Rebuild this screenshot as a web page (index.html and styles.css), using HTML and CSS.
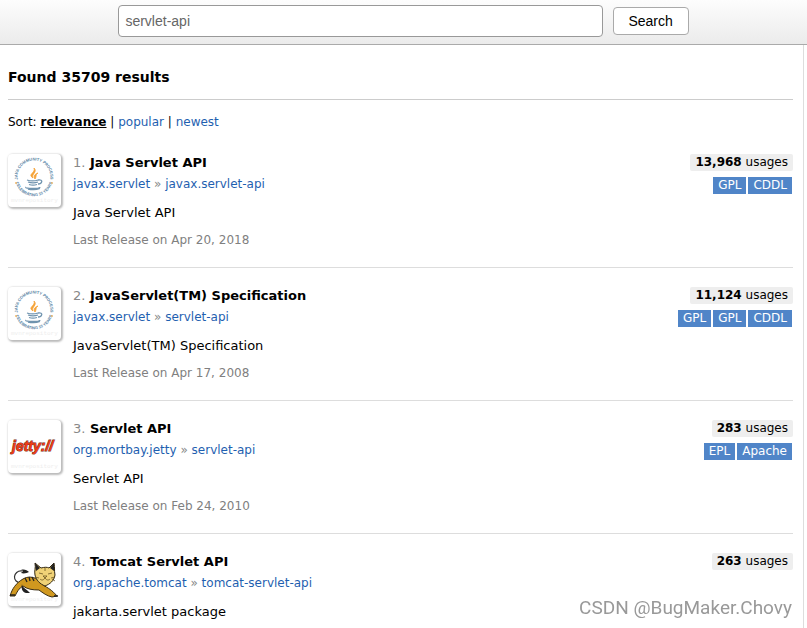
FILE: index.html
```html
<!DOCTYPE html>
<html lang="en">
<head>
  <meta charset="UTF-8" />
  <title>servlet-api - Search</title>
  <meta name="viewport" content="width=device-width, initial-scale=1.0" />
  <link rel="stylesheet" href="styles.css">
</head>
<body>

  <!-- Shared shapes of the Java logo -->
  <svg class="defs" aria-hidden="true">
    <defs>
      <path id="arc-top" d="M12.500 32.500A16.500 16.500 0 1 1 39.500 32.500" />
      <path id="arc-bottom" d="M7.600 28A19 19 0 0 0 44.400 28" />
      <g id="cup">
        <circle cx="8" cy="29" r=".9" fill="#f3b763" />
        <circle cx="44" cy="29" r=".9" fill="#f3b763" />
        <path d="M25 24c-6-4 3-5 1-10 4 4-3 6-1 10zM27 25c-2-3 0-5 3-6-3 2-1 3-3 6z" fill="#f5a236" stroke="#f5a236" stroke-width=".8" />
        <path d="M19 26c3 1 8 1 11 0M20 28c3 1 7 1 10 0M21 30.500c3 1 5 1 8 0M30 26c6-1 4 4 0 4M18 33c-2 2 14 2 14 0M20 35c4 1 8 1 12-.5" fill="none" stroke="#6f93ae" stroke-width="1.300" />
      </g>
    </defs>
  </svg>

  <header>
    <form class="search">
      <input type="text" name="q" value="servlet-api" aria-label="Search" />
      <button type="submit">Search</button>
    </form>
  </header>

  <main>
    <h2>Found 35709 results</h2>
    <div class="sort">
      Sort: <a class="active" href="#">relevance</a> | <a href="#">popular</a> | <a href="#">newest</a>
    </div>

    <div class="item">
      <div class="logo">
        <svg viewBox="0 0 53 53">
          <text class="ring"><textPath href="#arc-top" startOffset="50%">JAVA COMMUNITY PROCESS</textPath></text>
          <text class="ring"><textPath href="#arc-bottom" startOffset="50%">CELEBRATING 15 YEARS</textPath></text>
          <use href="#cup" />
        </svg>
        <span>mvnrepository</span>
      </div>
      <div class="info">
        <h3><span>1.</span> <a href="#">Java Servlet API</a></h3>
        <p class="path"><a href="#">javax.servlet</a> » <a href="#">javax.servlet-api</a></p>
        <p class="description">Java Servlet API</p>
        <p class="date">Last Release on Apr 20, 2018</p>
      </div>
      <div class="meta">
        <a class="usages" href="#"><b>13,968</b> usages</a>
        <div class="licenses"><span>GPL</span><span>CDDL</span></div>
      </div>
    </div>

    <div class="item">
      <div class="logo">
        <svg viewBox="0 0 53 53">
          <text class="ring"><textPath href="#arc-top" startOffset="50%">JAVA COMMUNITY PROCESS</textPath></text>
          <text class="ring"><textPath href="#arc-bottom" startOffset="50%">CELEBRATING 15 YEARS</textPath></text>
          <use href="#cup" />
        </svg>
        <span>mvnrepository</span>
      </div>
      <div class="info">
        <h3><span>2.</span> <a href="#">JavaServlet(TM) Specification</a></h3>
        <p class="path"><a href="#">javax.servlet</a> » <a href="#">servlet-api</a></p>
        <p class="description">JavaServlet(TM) Specification</p>
        <p class="date">Last Release on Apr 17, 2008</p>
      </div>
      <div class="meta">
        <a class="usages" href="#"><b>11,124</b> usages</a>
        <div class="licenses"><span>GPL</span><span>GPL</span><span>CDDL</span></div>
      </div>
    </div>

    <div class="item">
      <div class="logo">
        <svg viewBox="0 0 53 53">
          <text class="jetty" x="4" y="31">jetty://</text>
        </svg>
        <span>mvnrepository</span>
      </div>
      <div class="info">
        <h3><span>3.</span> <a href="#">Servlet API</a></h3>
        <p class="path"><a href="#">org.mortbay.jetty</a> » <a href="#">servlet-api</a></p>
        <p class="description">Servlet API</p>
        <p class="date">Last Release on Feb 24, 2010</p>
      </div>
      <div class="meta">
        <a class="usages" href="#"><b>283</b> usages</a>
        <div class="licenses"><span>EPL</span><span>Apache</span></div>
      </div>
    </div>

    <div class="item">
      <div class="logo">
        <svg viewBox="0 0 53 53">
          <path d="M14 30C3 30 5 17 14 18" fill="none" stroke="#333" stroke-width="1.200" />
          <path d="M13 17c3-1 6 0 8 2-2 1-5 2-8 1l2-2z" fill="#222" />
          <path d="M2 43c2-7 6-13 13-17 5-3 10-2 14 0l6 6c5 3 9 5 14 11l-5 1c-5-1-9-4-13-7-7 0-12-1-16-4-4 2-6 6-8 10z" fill="#d0981f" stroke="#3b2d12" />
          <path d="M14 31c0 4 5 5 8 9h-4c-4-1-5-5-4-9z" fill="#222" />
          <path d="M17 25l2 4M21 24l1 4M24 24l2 4M2 42h5M46 43h4" stroke="#222" stroke-width="1.300" />
          <path d="M27 10l6 5c4-1 6-1 8 0l5-5c1 5 0 7 1 12-1 6-5 9-10 11-5-2-9-6-10-11-1-4 1-7 0-12z" fill="#f0d277" stroke="#302611" />
          <path d="M27 10l5 5-4 3zM46 10l-4 5 4 3z" fill="#222" />
          <path d="M31 20l4 1M44 20l-4 1M37 15v3M35 23h4l-2 2zM37 25c-2 3-4 2-5 1M37 25c2 3 4 2 5 1M27 24l4 1M47 24l-4 1M47 28l-3-2" fill="none" stroke="#6b5622" stroke-width=".8" />
        </svg>
        <span>mvnrepository</span>
      </div>
      <div class="info">
        <h3><span>4.</span> <a href="#">Tomcat Servlet API</a></h3>
        <p class="path"><a href="#">org.apache.tomcat</a> » <a href="#">tomcat-servlet-api</a></p>
        <p class="description">jakarta.servlet package</p>
      </div>
      <div class="meta">
        <a class="usages" href="#"><b>263</b> usages</a>
      </div>
    </div>
  </main>

  <div class="watermark">CSDN @BugMaker.Chovy</div>

</body>
</html>
```
FILE: styles.css
```css
* {
  box-sizing: border-box;
}

body {
  margin: 0;
  min-height: 100vh;
  display: flex;
  flex-direction: column;
  font-family: Verdana, "DejaVu Sans", sans-serif;
  font-size: 12px;
  line-height: 21px;
  color: #000;
  background: #fff;
}

a {
  color: #1f5fb0;
  text-decoration: none;
}

.defs {
  position: absolute;
  width: 0;
  height: 0;
}

header {
  padding: 5px 0 7px;
  border-bottom: 1px solid #aaa;
  background: linear-gradient(#fdfdfd, #ebebeb);
}

.search {
  display: flex;
  justify-content: center;
  align-items: center;
  gap: 10px;
}

.search input,
.search button {
  font-family: Arial, "Liberation Sans", sans-serif;
  font-size: 14px;
  border: 1px solid #999;
  border-radius: 4px;
  background: #fff;
}

.search input {
  width: 60%;
  height: 32px;
  padding: 0 6px;
  color: #666;
}

.search button {
  width: 76px;
  height: 28px;
  padding: 0;
  color: #000;
  border-color: #aaa;
}

main {
  flex: 1;
  margin-right: 3px;
  padding: 22px 10px 0 8px;
  border-right: 1px solid #ddd;
}

h2 {
  margin: 0;
  padding-bottom: 12px;
  font-size: 14px;
  line-height: 20px;
  border-bottom: 1px solid #ccc;
}

.sort {
  margin: 12px 0 2px;
}

.sort .active {
  color: #000;
  font-weight: bold;
  text-decoration: underline;
}

.item {
  display: flex;
  align-items: flex-start;
  padding: 17px 0 16px;
  border-bottom: 1px solid #ddd;
}

.item:last-child {
  padding-bottom: 0;
  border-bottom: none;
}

.logo {
  position: relative;
  width: 53px;
  height: 53px;
  margin-top: 2px;
  border-radius: 4px;
  box-shadow: 1px 1px 2px 1px #bbb;
}

.logo svg {
  display: block;
  width: 53px;
  height: 53px;
}

.logo span {
  position: absolute;
  left: 3px;
  bottom: 3px;
  font-family: "Liberation Mono", monospace;
  font-size: 6px;
  line-height: 7px;
  color: #eee;
}

.ring {
  font-family: "Liberation Sans", sans-serif;
  font-size: 4px;
  font-weight: bold;
  text-anchor: middle;
  fill: #54809f;
}

.jetty {
  font-family: "Liberation Sans", sans-serif;
  font-size: 14px;
  font-weight: bold;
  font-style: italic;
  fill: #ee3b14;
  stroke: #7a3020;
  stroke-width: 1px;
  paint-order: stroke;
}

.info {
  flex: 1;
  margin-left: 12px;
}

.info h3,
.info p {
  margin: 0;
}

.info h3 {
  font-size: 13px;
}

.info h3 span {
  font-weight: normal;
  color: #888;
}

.info h3 a {
  color: #000;
}

.info .path {
  margin-top: 1px;
  color: #888;
}

.info .description {
  margin-top: 7px;
  font-size: 13px;
}

.info .date {
  margin-top: 7px;
  color: #808080;
}

.meta {
  display: flex;
  flex-direction: column;
  align-items: flex-end;
  gap: 6px;
  margin-top: 2px;
  line-height: 17px;
}

.usages {
  padding: 0 5px;
  color: #000;
  background: #eee;
  border-radius: 2px;
}

.licenses {
  display: flex;
  gap: 2px;
  margin-right: 1px;
}

.licenses span {
  padding: 0 5px;
  color: #fff;
  background: #5085c8;
}

.watermark {
  position: fixed;
  right: 15px;
  bottom: 8px;
  font-family: Roboto, sans-serif;
  font-size: 19px;
  line-height: 24px;
  color: #999;
}
```
